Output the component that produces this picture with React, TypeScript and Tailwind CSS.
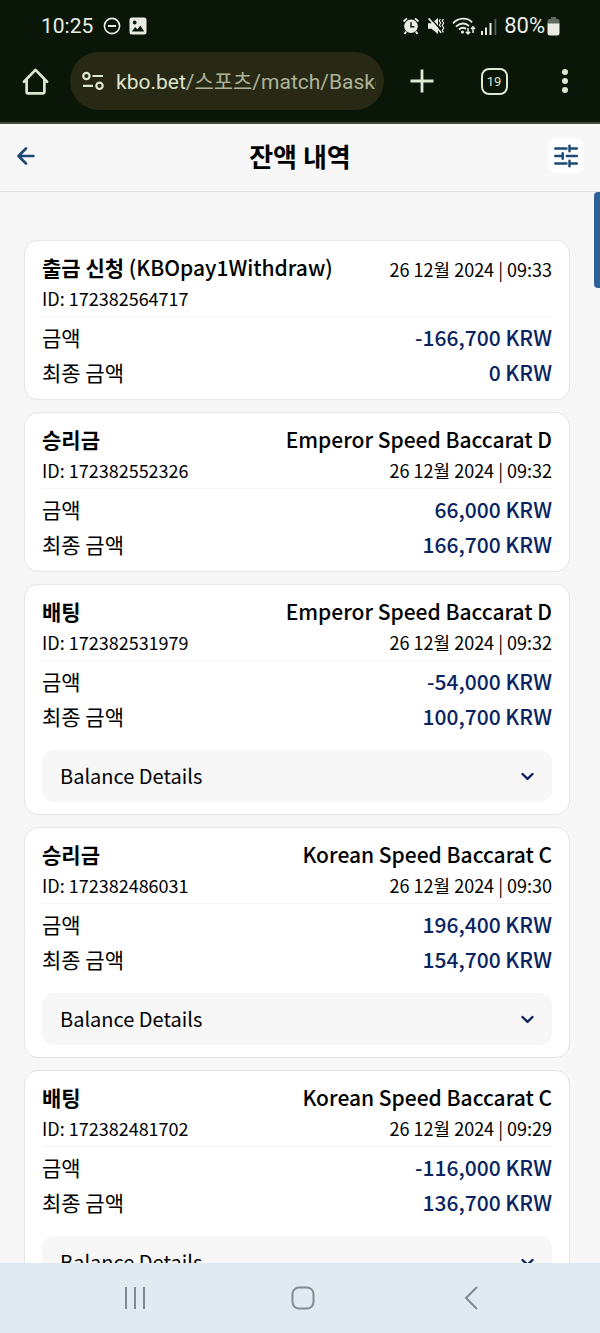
import React from "react";

type Transaction = {
  id: string;
  type: string;
  method?: string;
  game?: string;
  date: string;
  amount: string;
  finalAmount: string;
  hasDetails?: boolean;
};

const transactions: Transaction[] = [
  {
    id: "172382564717",
    type: "출금 신청",
    method: "(KBOpay1Withdraw)",
    date: "26 12월 2024 | 09:33",
    amount: "-166,700 KRW",
    finalAmount: "0 KRW",
  },
  {
    id: "172382552326",
    type: "승리금",
    game: "Emperor Speed Baccarat D",
    date: "26 12월 2024 | 09:32",
    amount: "66,000 KRW",
    finalAmount: "166,700 KRW",
  },
  {
    id: "172382531979",
    type: "배팅",
    game: "Emperor Speed Baccarat D",
    date: "26 12월 2024 | 09:32",
    amount: "-54,000 KRW",
    finalAmount: "100,700 KRW",
    hasDetails: true,
  },
  {
    id: "172382486031",
    type: "승리금",
    game: "Korean Speed Baccarat C",
    date: "26 12월 2024 | 09:30",
    amount: "196,400 KRW",
    finalAmount: "154,700 KRW",
    hasDetails: true,
  },
  {
    id: "172382481702",
    type: "배팅",
    game: "Korean Speed Baccarat C",
    date: "26 12월 2024 | 09:29",
    amount: "-116,000 KRW",
    finalAmount: "136,700 KRW",
    hasDetails: true,
  },
];

function StatusBar() {
  return (
    <div className="flex h-[52px] items-center justify-between pl-[41px] pr-10 leading-none text-[#e9ede4]">
      <div className="flex items-center gap-2.5 text-[21px]">
        <span>10:25</span>
        <svg width="18" height="18" viewBox="0 0 18 18" fill="none" stroke="currentColor" strokeWidth="1.6">
          <circle cx="9" cy="9" r="7.6" />
          <path d="M5 9h8" strokeWidth="2" />
        </svg>
        <svg className="-ml-0.5" width="18" height="18" viewBox="0 0 18 18" fill="currentColor">
          <path
            fillRule="evenodd"
            d="M3 .5h12A2.500 2.500 0 0 1 17.500 3v12a2.500 2.500 0 0 1-2.500 2.500H3A2.500 2.500 0 0 1 .5 15V3A2.500 2.500 0 0 1 3 .5ZM2.800 14.500h12.400L11.400 8.400 8.400 12.400 6.200 10ZM5.700 3.600a1.900 1.900 0 1 0 0 3.800 1.900 1.900 0 0 0 0-3.800Z"
          />
        </svg>
      </div>
      <div className="flex items-center gap-[7px] text-[22px]">
        <svg width="18" height="18" viewBox="0 0 18 18" fill="none" stroke="currentColor">
          <circle cx="9" cy="9.300" r="6.800" fill="currentColor" stroke="none" />
          <path d="M1.500 4.500 5 1.400M16.500 4.500 13 1.400" strokeWidth="1.800" />
          <path d="M4.200 14.500 2.500 17M13.800 14.500l1.700 2.500" strokeWidth="2" />
          <path d="M9 5.300v4.500h3.400" stroke="#0a1608" strokeWidth="1.500" />
        </svg>
        <svg width="18" height="18" viewBox="0 0 18 18" fill="none" stroke="currentColor">
          <path d="M1 6.200h3.500L11 1v16l-6.500-5.200H1Z" fill="currentColor" stroke="none" />
          <path d="m2.800 .4 13 14.600" stroke="#0a1608" strokeWidth="1.400" />
          <path d="m1.600 1.400 12.600 14.400" strokeWidth="1.600" />
          <path d="m13.300 2-1 2 1.400 2-1.400 2 1.400 2M16.300 2l-1 2 1.400 2-1.400 2.500 1.400 2.500-1.400 2.500 1 2" strokeWidth="1.200" />
        </svg>
        <svg width="24" height="20" viewBox="0 0 24 20" fill="none" stroke="currentColor" strokeWidth="1.900">
          <path d="M1 7.300C6.500 1.300 15.500 1.300 20 6.300" />
          <path d="M4 10.600c4-4 9.500-4 13-.6" />
          <path d="M7 13.500c2-2 5-2 7-.6" />
          <circle cx="10.500" cy="16" r="1.600" fill="currentColor" stroke="none" />
          <path d="M16 12v6m-2.200-2.200L16 18l2.200-2.200M21 17v-6m-2 2 2-2.200 2 2.200" strokeWidth="1.500" />
        </svg>
        <svg className="-ml-0.5" width="16" height="17" viewBox="0 0 16 17" fill="currentColor">
          <rect x="0" y="13" width="2" height="4" />
          <rect x="4" y="9.500" width="2" height="7.500" />
          <rect x="8.500" y="5" width="2" height="12" />
          <rect x="13.500" y="1" width="1.800" height="16" opacity=".35" />
        </svg>
        <span className="flex items-center gap-0.5">
          <span>80%</span>
          <svg width="13" height="19" viewBox="0 0 13 19" fill="currentColor">
            <path d="M4 0h5v2h1.500A2 2 0 0 1 12.500 4v3H.5V4a2 2 0 0 1 2-2H4Z" opacity=".4" />
            <path d="M.5 6.500h12V16a2.500 2.500 0 0 1-2.500 2.500H3A2.500 2.500 0 0 1 .5 16Z" />
          </svg>
        </span>
      </div>
    </div>
  );
}

function BrowserBar() {
  return (
    <div className="flex items-center pb-3 pl-4 text-[#dce8cf]">
      <button type="button" aria-label="Home" className="flex h-12 w-[38px] items-center justify-center">
        <svg width="27" height="27" viewBox="0 0 28 28" fill="none" stroke="currentColor" strokeWidth="2.800" strokeLinecap="round" strokeLinejoin="round">
          <path d="M2 14.300 14 2l12 12.300M4.800 12.500V25a1.400 1.400 0 0 0 1.400 1.400h15.600A1.400 1.400 0 0 0 23.200 25V12.500" />
        </svg>
      </button>
      <button type="button" className="ml-4 flex h-[58px] min-w-0 flex-1 items-center gap-3 rounded-full bg-[#272914] pl-3 pr-2 text-left">
        <svg className="shrink-0" width="22" height="20" viewBox="0 0 22 20" fill="none" stroke="currentColor" strokeWidth="2.200">
          <circle cx="4.400" cy="5" r="3.200" />
          <path d="M10.500 5H21M1 14.800h10" />
          <circle cx="17.500" cy="14.800" r="3.200" />
        </svg>
        <span className="min-w-0 flex-1 overflow-hidden whitespace-nowrap pt-0.5 text-[21px] leading-8 text-[#adb398]">
          <span className="text-[#dce3cc]">kbo.bet</span>/스포츠/match/Basketball
        </span>
      </button>
      <button type="button" aria-label="New tab" className="ml-0.5 flex h-12 w-[72px] items-center justify-center">
        <svg width="24" height="24" viewBox="0 0 24 24" stroke="currentColor" strokeWidth="2.800">
          <path d="M12 .5v23M.5 12h23" />
        </svg>
      </button>
      <button type="button" aria-label="Open tabs" className="flex h-12 w-[72px] items-center justify-center">
        <span className="flex size-[27px] items-center justify-center rounded-lg border-2 border-current text-[13px] leading-none">19</span>
      </button>
      <button type="button" aria-label="More options" className="flex h-12 w-[70px] items-center justify-center">
        <svg width="6" height="26" viewBox="0 0 6 26" fill="currentColor">
          <circle cx="3" cy="4" r="3" />
          <circle cx="3" cy="13" r="3" />
          <circle cx="3" cy="22" r="3" />
        </svg>
      </button>
    </div>
  );
}

function PageHeader() {
  return (
    <header className="grid shrink-0 grid-cols-[36px_1fr_36px] items-center border-b border-[#dfe0e1] pb-[18px] pl-2 pr-4 pt-3.5 text-[#1d4a75]">
      <button type="button" aria-label="Back" className="flex h-[35px] items-center justify-center">
        <svg width="18" height="18" viewBox="0 0 18 18" fill="none" stroke="currentColor" strokeWidth="2.600" strokeLinecap="round" strokeLinejoin="round">
          <path d="M9 1.500 1.500 9 9 16.500M2 9h14.500" />
        </svg>
      </button>
      <h1 className="pl-2 text-center text-[26px] font-bold leading-8 text-black">잔액 내역</h1>
      <button type="button" aria-label="Filter" className="flex h-[35px] items-center justify-center rounded-lg bg-white">
        <svg width="24" height="24" viewBox="0 0 24 24" fill="none" stroke="currentColor" strokeWidth="2.500" strokeLinecap="round">
          <path d="M1.300 4.500h11.200M15.500 1.800v5.400M15.500 4.500h7.300M1.300 12h7.400M8.700 9.300v5.400M12.700 12h10.100M1.300 19.500h11.200M15.500 16.800v5.400M15.500 19.500h7.300" />
        </svg>
      </button>
    </header>
  );
}

function TransactionCard({ item }: { item: Transaction }) {
  return (
    <li className="rounded-[14px] border border-[#e3e5e6] bg-white px-[17px] pb-[9px] pt-2.5">
      <div className="flex items-center justify-between text-[21px] leading-8">
        <h2 className="font-bold">
          {item.type}
          {item.method && <span className="font-medium"> {item.method}</span>}
        </h2>
        {item.game ? (
          <p className="font-medium">{item.game}</p>
        ) : (
          <p className="pt-1 text-[18px] leading-7">{item.date}</p>
        )}
      </div>
      <div className="flex justify-between border-b border-[#f3f3f3] pb-[3px] text-[18px] leading-[30px]">
        <p>ID: {item.id}</p>
        {item.game && <p>{item.date}</p>}
      </div>
      <dl className="mt-[3px] grid grid-cols-[auto_1fr] text-[21px] leading-[35px]">
        <dt>금액</dt>
        <dd className="text-right font-medium text-[#0b2461]">{item.amount}</dd>
        <dt>최종 금액</dt>
        <dd className="text-right font-medium text-[#0b2461]">{item.finalAmount}</dd>
      </dl>
      {item.hasDetails && (
        <button type="button" aria-expanded="false" className="mb-[3px] mt-4 flex h-[52px] w-full items-center justify-between rounded-xl bg-[#f7f7f7] px-[18px] text-[20px]">
          Balance Details
          <svg width="13" height="9" viewBox="0 0 13 9" fill="none" stroke="#0b2461" strokeWidth="2.400" strokeLinecap="round" strokeLinejoin="round">
            <path d="m1.500 2 5 4.800 5-4.800" />
          </svg>
        </button>
      )}
    </li>
  );
}

function SystemNav() {
  return (
    <nav aria-label="System" className="flex h-[70px] shrink-0 items-center justify-center gap-[120px] bg-[#e1e9f1] pl-1.5 text-[#84898e]">
      <button type="button" aria-label="Recent apps" className="flex size-12 items-center justify-center">
        <svg width="24" height="22" viewBox="0 0 24 22" stroke="currentColor" strokeWidth="2">
          <path d="M3 0v22M12 0v22M21 0v22" />
        </svg>
      </button>
      <button type="button" aria-label="Home screen" className="flex size-12 items-center justify-center">
        <svg width="24" height="24" viewBox="0 0 24 24" fill="none" stroke="currentColor" strokeWidth="2">
          <rect x="1.500" y="1.500" width="21" height="21" rx="6.500" />
        </svg>
      </button>
      <button type="button" aria-label="Previous screen" className="flex size-12 items-center justify-center">
        <svg width="14" height="24" viewBox="0 0 14 24" fill="none" stroke="currentColor" strokeWidth="2">
          <path d="M13 1 2 12l11 11" />
        </svg>
      </button>
    </nav>
  );
}

export default function App() {
  return (
    <div className="flex h-screen flex-col bg-[#f7f7f7] font-['Noto_Sans_CJK_KR',sans-serif] text-black">
      <div className="shrink-0 border-b-2 border-[#464b40] bg-[#0a1608] font-[Roboto,'Noto_Sans_CJK_KR',sans-serif]">
        <StatusBar />
        <BrowserBar />
      </div>
      <PageHeader />
      <div className="relative min-h-0 flex-1">
        <main className="h-full overflow-y-auto pb-6 pl-6 pr-[30px] pt-12 [scrollbar-width:none]">
          <ul className="flex flex-col gap-3">
            {transactions.map((item) => (
              <TransactionCard key={item.id} item={item} />
            ))}
          </ul>
        </main>
        <div className="absolute right-0 top-0 h-24 w-1.5 rounded-l bg-[#2c6296]" />
      </div>
      <SystemNav />
    </div>
  );
}
